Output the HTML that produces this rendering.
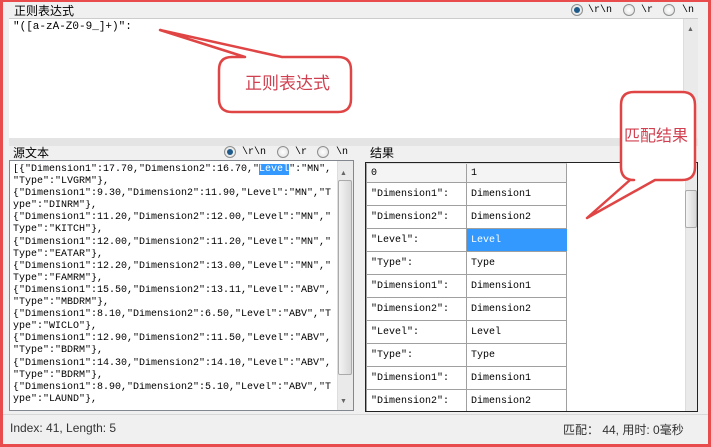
<!DOCTYPE html>
<html><head><meta charset="utf-8"><style>
*{margin:0;padding:0;box-sizing:border-box}
body{width:711px;height:447px;overflow:hidden;background:#f0f0f0;font-family:"Liberation Sans","Noto Sans CJK SC",sans-serif;font-size:12px;color:#000;position:relative}
.abs{position:absolute}
.frame{position:absolute;left:0;top:0;width:711px;height:447px;border:3px solid #e84c4c;border-top-width:2px;pointer-events:none;z-index:20}
.mono{font-family:"Liberation Mono",monospace;font-size:10px}
.box{background:#fff;border:1px solid #828790}
.sb{position:absolute;background:#eaeaea;border-left:1px solid #ddd}
.thumb{position:absolute;background:linear-gradient(90deg,#f4f4f4,#d8d8d8);border:1px solid #aaa;border-radius:2px}
.radio{position:absolute;width:12px;height:12px;border-radius:50%;border:1px solid #8e8f8f;background:radial-gradient(#fff,#ddd)}
.radio.on::after{content:"";position:absolute;left:2px;top:2px;width:6px;height:6px;border-radius:50%;background:#1e5a8a}
.rl{position:absolute;font-family:"Liberation Mono",monospace;font-size:10px}
.src{position:absolute;left:13px;top:164px;width:325px;height:246px;overflow:hidden}
.src div{height:12.1px;line-height:12.1px;white-space:pre;font-family:"Liberation Mono",monospace;font-size:10px;overflow:hidden}
.row{position:absolute;left:366px;width:201px;height:23px;border-bottom:1px solid #a0a0a0;border-left:1px solid #a0a0a0;border-right:1px solid #a0a0a0;font-family:"Liberation Mono",monospace;font-size:10px}
.row span{position:absolute;top:0;height:22px;line-height:23px;padding-left:4px}
.row .c0{left:0;width:100px;border-right:1px solid #a0a0a0}
.row .c1{left:100px;width:100px}
.sel{background:#3399ff;color:#fff}
</style></head><body>
<div class="abs" style="left:14px;top:2px;font-size:12px">正则表达式</div>
<div class="radio on" style="left:571px;top:4px"></div><div class="rl" style="left:588px;top:5px">\r\n</div>
<div class="radio" style="left:623px;top:4px"></div><div class="rl" style="left:641px;top:5px">\r</div>
<div class="radio" style="left:663px;top:4px"></div><div class="rl" style="left:682px;top:5px">\n</div>
<div class="abs" style="left:9px;top:18px;width:689px;height:1px;background:#ccc"></div>
<div class="abs" style="left:9px;top:19px;width:689px;height:119px;background:#fff"></div>
<div class="abs mono" style="left:13px;top:21px;font-size:11px">"([a-zA-Z0-9_]+)":</div>
<div class="sb" style="left:683px;top:19px;width:15px;height:119px"></div>
<div class="abs" style="left:687px;top:26px;font-size:7px;color:#666">▲</div>
<div class="abs" style="left:9px;top:138px;width:689px;height:8px;background:#e4e4e4"></div>

<div class="abs" style="left:13px;top:144px">源文本</div>
<div class="radio on" style="left:224px;top:146px"></div><div class="rl" style="left:242px;top:147px">\r\n</div>
<div class="radio" style="left:277px;top:146px"></div><div class="rl" style="left:295px;top:147px">\r</div>
<div class="radio" style="left:317px;top:146px"></div><div class="rl" style="left:336px;top:147px">\n</div>
<div class="box abs" style="left:9px;top:160px;width:345px;height:251px"></div>
<div class="src">
<div>[{"Dimension1":17.70,"Dimension2":16.70,"<span style="background:#3399ff;color:#fff">Level</span>":"MN",</div>
<div>"Type":"LVGRM"},</div>
<div>{"Dimension1":9.30,"Dimension2":11.90,"Level":"MN","T</div>
<div>ype":"DINRM"},</div>
<div>{"Dimension1":11.20,"Dimension2":12.00,"Level":"MN","</div>
<div>Type":"KITCH"},</div>
<div>{"Dimension1":12.00,"Dimension2":11.20,"Level":"MN","</div>
<div>Type":"EATAR"},</div>
<div>{"Dimension1":12.20,"Dimension2":13.00,"Level":"MN","</div>
<div>Type":"FAMRM"},</div>
<div>{"Dimension1":15.50,"Dimension2":13.11,"Level":"ABV",</div>
<div>"Type":"MBDRM"},</div>
<div>{"Dimension1":8.10,"Dimension2":6.50,"Level":"ABV","T</div>
<div>ype":"WICLO"},</div>
<div>{"Dimension1":12.90,"Dimension2":11.50,"Level":"ABV",</div>
<div>"Type":"BDRM"},</div>
<div>{"Dimension1":14.30,"Dimension2":14.10,"Level":"ABV",</div>
<div>"Type":"BDRM"},</div>
<div>{"Dimension1":8.90,"Dimension2":5.10,"Level":"ABV","T</div>
<div>ype":"LAUND"},</div>
</div>
<div class="sb" style="left:337px;top:161px;width:16px;height:249px"></div>
<div class="thumb" style="left:338px;top:180px;width:14px;height:195px"></div>
<div class="abs" style="left:340px;top:170px;font-size:7px;color:#666">▲</div>
<div class="abs" style="left:340px;top:398px;font-size:7px;color:#666">▼</div>

<div class="abs" style="left:370px;top:144px">结果</div>
<div class="abs" style="left:365px;top:162px;width:333px;height:250px;background:#fff;border:1px solid #222;overflow:hidden"></div>
<div class="row" style="top:163px;height:20px;background:#f4f4f4;border-top:1px solid #ddd"><span class="c0" style="height:19px;line-height:19px">0</span><span class="c1" style="height:19px;line-height:19px">1</span></div>
<div class="row" style="top:183px"><span class="c0">"Dimension1":</span><span class="c1">Dimension1</span></div>
<div class="row" style="top:206px"><span class="c0">"Dimension2":</span><span class="c1">Dimension2</span></div>
<div class="row" style="top:229px"><span class="c0">"Level":</span><span class="c1 sel">Level</span></div>
<div class="row" style="top:252px"><span class="c0">"Type":</span><span class="c1">Type</span></div>
<div class="row" style="top:275px"><span class="c0">"Dimension1":</span><span class="c1">Dimension1</span></div>
<div class="row" style="top:298px"><span class="c0">"Dimension2":</span><span class="c1">Dimension2</span></div>
<div class="row" style="top:321px"><span class="c0">"Level":</span><span class="c1">Level</span></div>
<div class="row" style="top:344px"><span class="c0">"Type":</span><span class="c1">Type</span></div>
<div class="row" style="top:367px"><span class="c0">"Dimension1":</span><span class="c1">Dimension1</span></div>
<div class="row" style="top:390px;height:21px;border-bottom:none"><span class="c0" style="height:21px">"Dimension2":</span><span class="c1">Dimension2</span></div>
<div class="sb" style="left:685px;top:163px;width:12px;height:248px"></div>
<div class="thumb" style="left:685px;top:190px;width:12px;height:38px"></div>

<div class="abs" style="left:0;top:414px;width:711px;height:1px;background:#d8d8d8"></div>
<div class="abs" style="left:10px;top:421px;color:#333">Index: 41, Length: 5</div>
<div class="abs" style="left:563px;top:421px;color:#333">匹配： 44, 用时: 0毫秒</div>

<svg class="abs" style="left:0;top:0;z-index:10" width="711" height="447">
<g fill="#fff" stroke="#e04545" stroke-width="2.5" stroke-linejoin="round">
<path d="M160,30 L282,57 L338,57 Q351,57 351,70 L351,99 Q351,112 338,112 L232,112 Q219,112 219,99 L219,70 Q219,57 232,57 L245,57 Z"/>
<path d="M587,218 L630,180 L634,180 Q621,180 621,167 L621,105 Q621,92 634,92 L682,92 Q695,92 695,105 L695,167 Q695,180 682,180 L655,180 Z"/>
</g>
<text x="245" y="89" font-size="17" fill="#d04050" font-family="Noto Sans CJK SC,sans-serif">正则表达式</text>
<text x="624" y="141" font-size="16" fill="#d04050" font-family="Noto Sans CJK SC,sans-serif">匹配结果</text>
</svg>
<div class="frame"></div>
</body></html>
